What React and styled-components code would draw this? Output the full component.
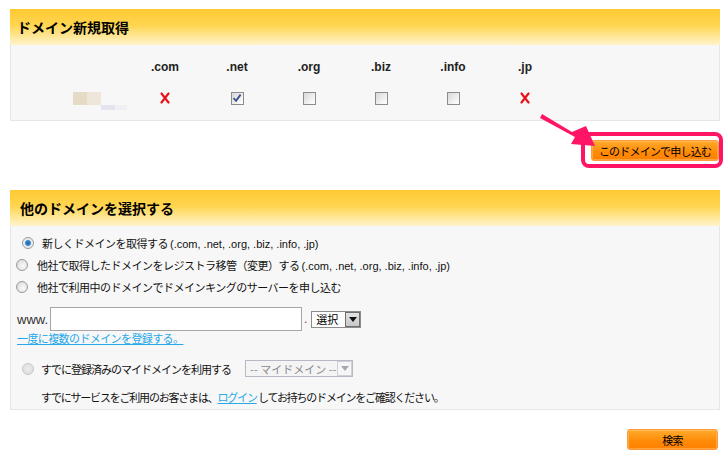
import React from "react";
import styled, { createGlobalStyle } from "styled-components";

const GlobalStyle = createGlobalStyle`
  body {
    margin: 0;
    background: #ffffff;
    font-family: "Liberation Sans", "Noto Sans CJK JP", sans-serif;
    font-size: 12px;
    color: #111;
  }
`;

const tlds = [
  { name: ".com", state: "x" },
  { name: ".net", state: "checked" },
  { name: ".org", state: "box" },
  { name: ".biz", state: "box" },
  { name: ".info", state: "box" },
  { name: ".jp", state: "x" },
];

function XMark() {
  return (
    <svg width="10" height="12" viewBox="0 0 10 12">
      <path d="M1.5 1.5 L8.5 10.5 M8.5 1.5 L1.5 10.5" stroke="#e5141e" strokeWidth="2.2" strokeLinecap="round" />
    </svg>
  );
}

function Check({ checked }) {
  return (
    <CheckBox>
      {checked && (
        <svg width="10" height="10" viewBox="0 0 10 10">
          <path d="M1.5 5 L4 7.8 L8.6 1.6" stroke="#3c4f8c" strokeWidth="1.8" fill="none" />
        </svg>
      )}
    </CheckBox>
  );
}

function App() {
  return (
    <Page>
      <GlobalStyle />
      <Panel>
        <PanelHeader>ドメイン新規取得</PanelHeader>
        <TldBody>
          <TldGrid>
            <span />
            {tlds.map((t) => (
              <TldLabel key={t.name}>{t.name}</TldLabel>
            ))}
            <Thumb>
              <ThumbCell $c="#e6dbc6" $area="a" />
              <ThumbCell $c="#efe6da" $area="b" />
              <ThumbCell $c="#e4e4ee" $area="c" />
              <ThumbCell $c="#efeff4" $area="d" />
            </Thumb>
            {tlds.map((t) => (
              <TldCell key={t.name}>
                {t.state === "x" ? <XMark /> : <Check checked={t.state === "checked"} />}
              </TldCell>
            ))}
          </TldGrid>
        </TldBody>
      </Panel>

      <ApplyRow>
        <Arrow width="60" height="40" viewBox="0 0 60 40">
          <polygon points="4,3 34,21 48,15 57,35 33,33 37,26 2,7" fill="#ff1466" />
        </Arrow>
        <Highlight>
          <OrangeButton $w="128px">このドメインで申し込む</OrangeButton>
        </Highlight>
      </ApplyRow>

      <Panel $top="22px">
        <PanelHeader $pl="10px">他のドメインを選択する</PanelHeader>
        <SelectBody>
          <RadioRow $indent="11px" $gap="8px">
            <Radio $checked />
            <span>
              新しくドメインを取得する <Latin>(.com, .net, .org, .biz, .info, .jp)</Latin>
            </span>
          </RadioRow>
          <RadioRow $indent="5px" $gap="9px">
            <Radio />
            <span>
              他社で取得したドメインをレジストラ移管（変更）する <Latin>(.com, .net, .org, .biz, .info, .jp)</Latin>
            </span>
          </RadioRow>
          <RadioRow $indent="5px" $gap="9px">
            <Radio />
            <span>他社で利用中のドメインでドメインキングのサーバーを申し込む</span>
          </RadioRow>

          <WwwRow>
            <WwwLabel>www.</WwwLabel>
            <DomainInput />
            <Dot>.</Dot>
            <FakeSelect>
              <span>選択</span>
              <SelectArrow>
                <svg width="8" height="5" viewBox="0 0 8 5">
                  <polygon points="0,0 8,0 4,5" fill="#111" />
                </svg>
              </SelectArrow>
            </FakeSelect>
          </WwwRow>
          <BulkLink href="#">一度に複数のドメインを登録する。</BulkLink>

          <MyDomainRow>
            <Radio $disabled />
            <span>すでに登録済みのマイドメインを利用する</span>
            <FakeSelect $disabled $w="108px">
              <span>-- マイドメイン --</span>
              <SelectArrow $disabled>
                <svg width="8" height="5" viewBox="0 0 8 5">
                  <polygon points="0,0 8,0 4,5" fill="#a8a8b0" />
                </svg>
              </SelectArrow>
            </FakeSelect>
          </MyDomainRow>
          <Notice>
            すでにサービスをご利用のお客さまは、<TextLink href="#">ログイン</TextLink> してお持ちのドメインをご確認ください。
          </Notice>
        </SelectBody>
      </Panel>

      <SearchRow>
        <OrangeButton $w="91px">検索</OrangeButton>
      </SearchRow>
    </Page>
  );
}

export default App;

const Page = styled.div`
  width: 725px;
  height: 460px;
  padding-top: 9px;
  box-sizing: border-box;
  overflow: hidden;
`;

const Panel = styled.section`
  margin: ${({ $top }) => $top || "0"} 0 0 10px;
  width: 710px;
`;

const PanelHeader = styled.h2`
  margin: 0;
  height: 36px;
  display: flex;
  align-items: center;
  padding-left: ${({ $pl }) => $pl || "7px"};
  background: linear-gradient(#ffc933 0%, #ffd550 45%, #ffe9a0 80%, #fff3cc 100%);
  font-size: 14px;
  font-weight: bold;
  color: #000;
  font-family: "Noto Sans CJK JP", sans-serif;
`;

const TldBody = styled.div`
  background: #f7f7f7;
  border: 1px solid #e6e6e6;
  border-top: none;
  height: 76px;
  box-sizing: border-box;
  padding-top: 15px;
`;

const TldGrid = styled.div`
  display: grid;
  grid-template-columns: 118px repeat(6, 72px);
  grid-template-rows: 14px 14px;
  row-gap: 17px;
  align-items: center;
`;

const TldLabel = styled.span`
  text-align: center;
  font-size: 12px;
  font-weight: bold;
  color: #222;
`;

const TldCell = styled.span`
  display: flex;
  justify-content: center;
  align-items: center;
`;

const Thumb = styled.div`
  margin-left: 62px;
  display: grid;
  grid-template-columns: 14px 14px 14px 12px;
  grid-template-rows: 13px 5px;
  grid-template-areas: "a b . ." ". . c d";
  transform: translateY(3px);
`;

const ThumbCell = styled.span`
  grid-area: ${({ $area }) => $area};
  background: ${({ $c }) => $c};
`;

const CheckBox = styled.span`
  width: 11px;
  height: 11px;
  border: 1px solid #8c8c8c;
  background: linear-gradient(135deg, #d8d8d8, #f4f4f4 70%, #ffffff);
  display: flex;
  align-items: center;
  justify-content: center;
`;

const ApplyRow = styled.div`
  position: relative;
  height: 36px;
  margin-top: 11px;
  display: flex;
  justify-content: flex-end;
  padding-right: 2px;
`;

const Arrow = styled.svg`
  position: absolute;
  left: 538px;
  top: -21px;
`;

const Highlight = styled.div`
  border: 4px solid #ff1466;
  border-radius: 8px;
  padding: 3px 0 2px 6px;
  display: flex;
  align-items: center;
  background: #fff;
`;

const OrangeButton = styled.button`
  width: ${({ $w }) => $w};
  height: 21px;
  padding: 0;
  border: 1px solid #ff9a3c;
  border-radius: 3px;
  background: linear-gradient(#ffab2e, #ff8a06 60%, #ff8000);
  box-shadow: inset 0 0 0 1px rgba(255, 200, 120, 0.5);
  font-family: "Noto Sans CJK JP", sans-serif;
  font-size: 11px;
  letter-spacing: -0.8px;
  white-space: nowrap;
  color: #000;
  cursor: pointer;
`;

const SelectBody = styled.div`
  background: #f7f7f7;
  border: 1px solid #e6e6e6;
  border-top: none;
  height: 184px;
  box-sizing: border-box;
  padding: 6px 0 0 0;
`;

const RadioRow = styled.div`
  display: flex;
  align-items: center;
  gap: ${({ $gap }) => $gap};
  height: 22px;
  padding-left: ${({ $indent }) => $indent};
  font-size: 11px;
  letter-spacing: -0.5px;
  font-family: "Noto Sans CJK JP", sans-serif;
  color: #111;
  white-space: nowrap;
`;

const Latin = styled.span`
  font-family: "Liberation Sans", sans-serif;
  color: #111;
  font-size: 11px;
  letter-spacing: 0;
`;

const Radio = styled.span`
  width: 10px;
  height: 10px;
  flex: none;
  border-radius: 50%;
  border: 1px solid ${({ $disabled }) => ($disabled ? "#c8c8c8" : "#9a9a9a")};
  background: ${({ $checked, $disabled }) =>
    $checked
      ? "radial-gradient(circle, #1a5ca8 0, #3b8ed8 2.5px, #e8e8e8 3.5px, #f8f8f8 100%)"
      : $disabled
      ? "radial-gradient(circle, #ececec, #dadada)"
      : "radial-gradient(circle at 60% 60%, #fafafa, #d4d4d4)"};
`;

const WwwRow = styled.div`
  display: flex;
  align-items: center;
  margin-top: 9px;
  padding-left: 6px;
  height: 24px;
`;

const WwwLabel = styled.span`
  width: 33px;
  font-family: "Liberation Sans", sans-serif;
  font-size: 13px;
  color: #333;
`;

const DomainInput = styled.input`
  width: 252px;
  height: 24px;
  box-sizing: border-box;
  margin: 0;
  padding: 0 3px;
  border: 1px solid #a6a6a6;
  background: #fff;
  outline: none;
`;

const Dot = styled.span`
  color: #883366;
  margin: 0 4px 0 2px;
  font-size: 12px;
`;

const FakeSelect = styled.span`
  width: ${({ $w }) => $w || "50px"};
  height: 17px;
  flex: none;
  box-sizing: border-box;
  border: 1px solid ${({ $disabled }) => ($disabled ? "#b8b8c4" : "#8c8c8c")};
  background: ${({ $disabled }) => ($disabled ? "#f4f4f4" : "#fff")};
  display: flex;
  align-items: center;
  justify-content: space-between;
  padding-left: 4px;
  font-family: "Noto Sans CJK JP", sans-serif;
  font-size: 11px;
  letter-spacing: 0;
  white-space: nowrap;
  color: ${({ $disabled }) => ($disabled ? "#8a8a8a" : "#000")};
`;

const SelectArrow = styled.span`
  width: 15px;
  height: 15px;
  box-sizing: border-box;
  border: 1px solid ${({ $disabled }) => ($disabled ? "#d0d0d8" : "#6e6e6e")};
  background: ${({ $disabled }) => ($disabled ? "#f6f6f6" : "linear-gradient(#e4e4e4, #c8c8c8)")};
  display: flex;
  align-items: center;
  justify-content: center;
`;

const BulkLink = styled.a`
  display: block;
  width: fit-content;
  margin-left: 6px;
  line-height: 14px;
  font-family: "Noto Sans CJK JP", sans-serif;
  font-size: 11px;
  letter-spacing: -0.6px;
  color: #28a8e8;
  text-decoration: underline;
`;

const MyDomainRow = styled.div`
  display: flex;
  align-items: center;
  gap: 7px;
  margin-top: 15px;
  padding-left: 11px;
  height: 17px;
  font-family: "Noto Sans CJK JP", sans-serif;
  font-size: 11px;
  letter-spacing: -1px;
  color: #111;
  white-space: nowrap;
  & > :nth-child(3) {
    margin-left: 7px;
  }
`;

const Notice = styled.p`
  margin: 13px 0 0 30px;
  line-height: 14px;
  font-family: "Noto Sans CJK JP", sans-serif;
  font-size: 11px;
  letter-spacing: -1.2px;
  color: #111;
  white-space: nowrap;
`;

const TextLink = styled.a`
  color: #28a8e8;
  text-decoration: underline;
`;

const SearchRow = styled.div`
  display: flex;
  justify-content: flex-end;
  margin-top: 19px;
  padding-right: 7px;
`;
